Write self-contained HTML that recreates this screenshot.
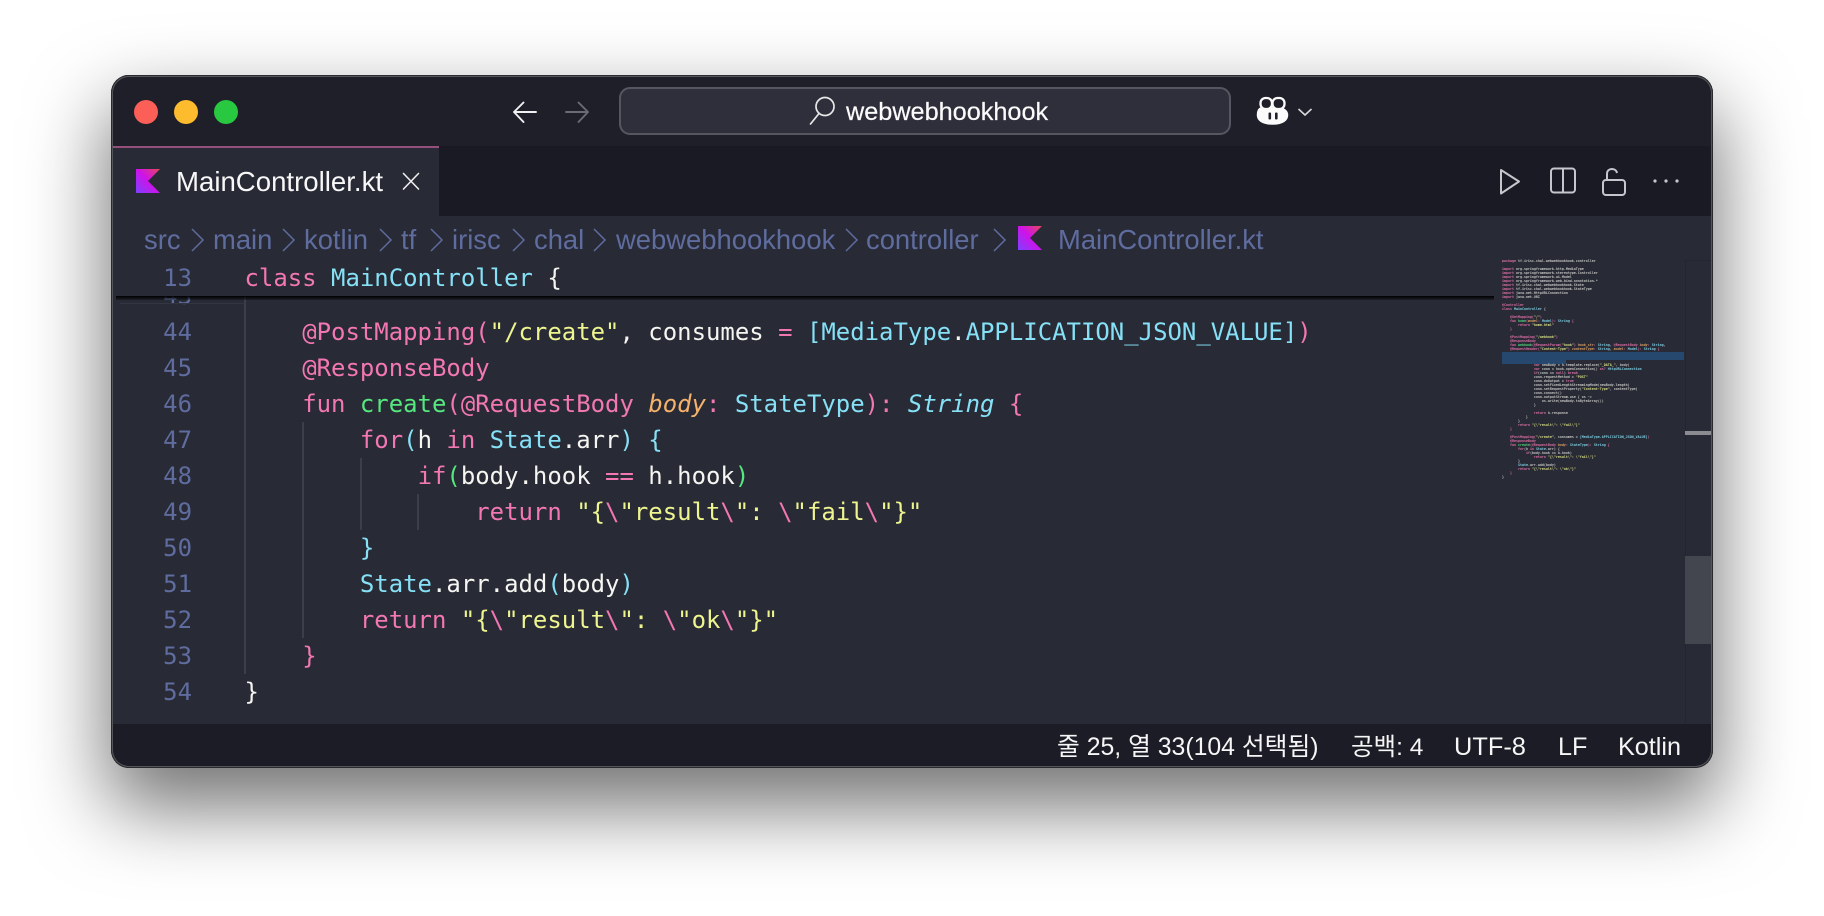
<!DOCTYPE html>
<html><head><meta charset="utf-8"><style>
html,body{margin:0;padding:0;width:1824px;height:916px;background:#fff;overflow:hidden}
.win{position:absolute;left:111px;top:75px;width:1602px;height:693px;border-radius:18px;box-shadow:0 36px 78px 4px rgba(0,0,0,.55)}
.abs{position:absolute}
.s{position:absolute;white-space:pre;font-family:"Liberation Sans","Noto Sans CJK KR",sans-serif;line-height:1}
.bc{font-size:27.4px;color:#5f6c9e;top:226px}
.m{font-family:"DejaVu Sans Mono","Liberation Mono",monospace;font-size:23.96px;line-height:36px;white-space:pre;position:absolute;left:244.5px;color:#f5f6f1}
.n{position:absolute;left:130px;width:62px;text-align:right;font-family:"DejaVu Sans Mono",monospace;font-size:23.96px;line-height:36px;color:#5f6c9e}
.p{color:#f277b2}.c{color:#86e1f6}.g{color:#55e87f}.y{color:#eef58f}.o{color:#f5b26b;font-style:italic}.ci{color:#86e1f6;font-style:italic}
.g1{position:absolute;width:2px;background:#3c3e4c}
.mm{position:absolute;left:1502px;font-family:"DejaVu Sans Mono",monospace;font-size:3.32px;line-height:4px;white-space:pre;color:#d8d9d4;font-weight:bold;filter:blur(.25px);opacity:.88}
</style></head><body>
<div class="win"></div>
<div class="abs" style="left:111px;top:75px;width:1602px;height:693px;border-radius:18px;overflow:hidden;background:#282a36">
 <div class="abs" style="left:0;top:0;width:1602px;height:71px;background:#1e1f29"></div>
 <div class="abs" style="left:0;top:71px;width:1602px;height:70px;background:#191a24"></div>
 <div class="abs" style="left:0;top:71px;width:328px;height:70px;background:#282a36"></div>
 <div class="abs" style="left:0;top:71px;width:328px;height:2px;background:#94507a"></div>
 <div class="abs" style="left:0;top:649px;width:1602px;height:44px;background:#1b1c26"></div>
</div>

<!-- traffic lights -->
<div class="abs" style="left:134px;top:100px;width:24px;height:24px;border-radius:50%;background:#fb5f57"></div>
<div class="abs" style="left:174px;top:100px;width:24px;height:24px;border-radius:50%;background:#fdbc2e"></div>
<div class="abs" style="left:214px;top:100px;width:24px;height:24px;border-radius:50%;background:#28c840"></div>

<!-- nav -->
<svg class="abs" style="left:505px;top:95px" width="95" height="35" fill="none" stroke-linecap="round" stroke-linejoin="round" stroke-width="1.900">
 <path d="M9 17H31M18.500 7.500L9 17L18.500 27" stroke="#f1f1f3"/>
 <path d="M61 17H83M73.500 7.500L83 17L73.500 27" stroke="#6a6b74"/>
</svg>
<div class="abs" style="left:619px;top:87px;width:612px;height:48px;box-sizing:border-box;border:2px solid #55565f;border-radius:11px;background:#2e2f3a"></div>
<svg class="abs" style="left:805px;top:93px" width="36" height="36" fill="none" stroke="#e8e8ea" stroke-width="1.700" stroke-linecap="round">
 <circle cx="20" cy="13.500" r="9"/><path d="M14 20.500L5.500 31"/>
</svg>
<div class="s" style="left:846px;top:100px;font-size:25.25px;color:#fbfbfb;-webkit-text-stroke:.2px #fbfbfb">webwebhookhook</div>

<!-- copilot -->
<svg class="abs" style="left:1254px;top:94px" width="62" height="34">
 <path d="M3.500 21C3.500 17 5 14.500 7 14L26 14C30 14.500 33.500 17 33.500 21C33.500 26 29 30 18.500 30C8 30 3.500 26 3.500 21Z" fill="#fbfbfb" stroke="#fbfbfb" stroke-width="1.500"/>
 <rect x="6.500" y="4" width="11.500" height="11" rx="5" fill="#1e1f29" stroke="#fbfbfb" stroke-width="2.300"/>
 <rect x="18.500" y="4" width="12" height="11" rx="5" fill="#1e1f29" stroke="#fbfbfb" stroke-width="2.300"/>
 <rect x="14.500" y="18.500" width="2.600" height="7" rx="1" fill="#1e1f29"/><rect x="21" y="18.500" width="2.600" height="7" rx="1" fill="#1e1f29"/>
 <path d="M44.500 15L51 21L57.500 15" fill="none" stroke="#d8d8db" stroke-width="1.600"/>
</svg>

<!-- tab -->
<svg class="abs" style="left:136px;top:169px" width="24" height="24"><defs><linearGradient id="k" x1="24" y1="0" x2="0" y2="24" gradientUnits="userSpaceOnUse"><stop offset="0" stop-color="#e44857"/><stop offset=".47" stop-color="#d012e8"/><stop offset="1" stop-color="#7f40ff"/></linearGradient></defs><path d="M0 0H24L12 12L24 24H0Z" fill="url(#k)"/></svg>
<div class="s" style="left:176px;top:168px;font-size:27.6px;color:#f8f8f8">MainController.kt</div>
<svg class="abs" style="left:400px;top:170px" width="22" height="22" fill="none" stroke="#eeeeee" stroke-width="1.600" stroke-linecap="round"><path d="M3.500 3.500L18.500 19M18.500 3.500L3.500 19"/></svg>

<!-- actions -->
<svg class="abs" style="left:1495px;top:163px" width="195" height="37" fill="none" stroke="#c6c7cd" stroke-width="2" stroke-linejoin="round">
 <path d="M6 7V30.500L24 18.500Z"/>
 <rect x="56" y="5.500" width="24" height="24" rx="3"/><path d="M68 5.500V29.500"/>
 <rect x="108" y="17" width="22" height="15" rx="3"/><path d="M112 17V11C112 7.500 114.500 6 117 6C119.500 6 121.500 7.500 122 10"/>
 <circle cx="160" cy="18" r="1.600" fill="#c6c7cd" stroke="none"/><circle cx="171" cy="18" r="1.600" fill="#c6c7cd" stroke="none"/><circle cx="182" cy="18" r="1.600" fill="#c6c7cd" stroke="none"/>
</svg>

<!-- breadcrumbs -->
<div class="s bc" style="left:144px">src</div>
<div class="s bc" style="left:213px">main</div>
<div class="s bc" style="left:304px">kotlin</div>
<div class="s bc" style="left:401px">tf</div>
<div class="s bc" style="left:452px">irisc</div>
<div class="s bc" style="left:534px">chal</div>
<div class="s bc" style="left:616px">webwebhookhook</div>
<div class="s bc" style="left:866px">controller</div>
<div class="s bc" style="left:1058px">MainController.kt</div>
<svg class="abs" style="left:0;top:226px" width="1010" height="26" fill="none" stroke="#5f6c9e" stroke-width="1.500"><path d="M192 3L203 14L192 25M283 3L294 14L283 25M380 3L391 14L380 25M431 3L442 14L431 25M513 3L524 14L513 25M594 3L605 14L594 25M846 3L857 14L846 25M994 3L1005 14L994 25"/></svg>
<svg class="abs" style="left:1018px;top:226px" width="24" height="24"><defs><linearGradient id="k2" x1="24" y1="0" x2="0" y2="24" gradientUnits="userSpaceOnUse"><stop offset="0" stop-color="#e44857"/><stop offset=".47" stop-color="#d012e8"/><stop offset="1" stop-color="#7f40ff"/></linearGradient></defs><path d="M0 0H24L12 12L24 24H0Z" fill="url(#k2)"/></svg>

<!-- guides -->
<div class="g1" style="left:244px;top:296px;height:378px"></div>
<div class="g1" style="left:302px;top:422px;height:216px"></div>
<div class="g1" style="left:360px;top:458px;height:72px"></div>
<div class="g1" style="left:417px;top:494px;height:36px"></div>

<!-- code -->
<div class="n" style="top:278px">43</div>
<div class="n" style="top:314px">44</div><div class="n" style="top:350px">45</div><div class="n" style="top:386px">46</div><div class="n" style="top:422px">47</div><div class="n" style="top:458px">48</div><div class="n" style="top:494px">49</div><div class="n" style="top:530px">50</div><div class="n" style="top:566px">51</div><div class="n" style="top:602px">52</div><div class="n" style="top:638px">53</div><div class="n" style="top:674px">54</div>

<div class="m" style="top:314px">    <span class="p">@PostMapping(</span><span class="y">"/create"</span>, consumes <span class="p">=</span> <span class="c">[MediaType</span>.<span class="c">APPLICATION_JSON_VALUE]</span><span class="p">)</span></div>
<div class="m" style="top:350px">    <span class="p">@ResponseBody</span></div>
<div class="m" style="top:386px">    <span class="p">fun</span> <span class="g">create</span><span class="p">(@RequestBody</span> <span class="o">body</span><span class="p">:</span> <span class="c">StateType</span><span class="p">):</span> <span class="ci">String</span> <span class="p">{</span></div>
<div class="m" style="top:422px">        <span class="p">for</span><span class="c">(</span>h <span class="p">in</span> <span class="c">State</span>.arr<span class="c">) {</span></div>
<div class="m" style="top:458px">            <span class="p">if</span><span class="g">(</span>body.hook <span class="p">==</span> h.hook<span class="g">)</span></div>
<div class="m" style="top:494px">                <span class="p">return</span> <span class="y">"{</span><span class="p">\</span><span class="y">"result</span><span class="p">\</span><span class="y">": </span><span class="p">\</span><span class="y">"fail</span><span class="p">\</span><span class="y">"}"</span></div>
<div class="m" style="top:530px">        <span class="c">}</span></div>
<div class="m" style="top:566px">        <span class="c">State</span>.arr.add<span class="c">(</span>body<span class="c">)</span></div>
<div class="m" style="top:602px">        <span class="p">return</span> <span class="y">"{</span><span class="p">\</span><span class="y">"result</span><span class="p">\</span><span class="y">": </span><span class="p">\</span><span class="y">"ok</span><span class="p">\</span><span class="y">"}"</span></div>
<div class="m" style="top:638px">    <span class="p">}</span></div>
<div class="m" style="top:674px">}</div>

<!-- sticky -->
<div class="abs" style="left:113px;top:256px;width:1380px;height:40px;background:#282a36"></div>
<div class="abs" style="left:116px;top:296px;width:1378px;height:4px;background:linear-gradient(#000,rgba(0,0,0,.25))"></div>
<div class="abs" style="left:120px;top:303px;width:125px;height:1px;background:#333543"></div>
<div class="n" style="top:260px">13</div>
<div class="m" style="top:260px"><span class="p">class</span> <span class="c">MainController</span> {</div>

<!-- minimap -->
<div class="abs" style="left:1494px;top:256px;width:191px;height:467px;background:#282a36"></div>
<div class="abs" style="left:1502px;top:352px;width:182px;height:8px;background:#26486e"></div>
<div class="abs" style="left:1502px;top:360px;width:64px;height:4px;background:#26486e"></div>
<div class="mm" style="top:259px"><span class="p">package</span> tf.irisc.chal.webwebhookhook.controller

<span class="p">import</span> org.springframework.http.MediaType
<span class="p">import</span> org.springframework.stereotype.Controller
<span class="p">import</span> org.springframework.ui.Model
<span class="p">import</span> org.springframework.web.bind.annotation.*
<span class="p">import</span> tf.irisc.chal.webwebhookhook.State
<span class="p">import</span> tf.irisc.chal.webwebhookhook.StateType
<span class="p">import</span> java.net.HttpURLConnection
<span class="p">import</span> java.net.URI

<span class="p">@Controller</span>
<span class="p">class</span> <span class="c">MainController</span> {

    <span class="p">@GetMapping(</span><span class="y">"/"</span><span class="p">)</span>
    <span class="p">fun</span> <span class="g">home</span><span class="p">(</span><span class="o">model</span><span class="p">:</span> <span class="c">Model</span><span class="p">):</span> <span class="c">String</span> <span class="p">{</span>
        <span class="p">return</span> <span class="y">"home.html"</span>
    <span class="p">}</span>

    <span class="p">@PostMapping(</span><span class="y">"/webhook"</span><span class="p">)</span>
    <span class="p">@ResponseBody</span>
    <span class="p">fun</span> <span class="g">webhook</span><span class="p">(@RequestParam(</span><span class="y">"hook"</span><span class="p">)</span> <span class="o">hook_str</span><span class="p">:</span> <span class="c">String</span>, <span class="p">@RequestBody</span> <span class="o">body</span><span class="p">:</span> <span class="c">String</span>,
    <span class="p">@RequestHeader(</span><span class="y">"Content-Type"</span><span class="p">)</span> <span class="o">contentType</span><span class="p">:</span> <span class="c">String</span>, <span class="o">model</span><span class="p">:</span> <span class="c">Model</span><span class="p">):</span> <span class="c">String</span> <span class="p">{</span>



                <span class="p">var</span> newBody = h.template.replace(<span class="y">"_DATA_"</span>, body)
                <span class="p">var</span> conn = hook.openConnection() <span class="p">as?</span> <span class="c">HttpURLConnection</span>
                <span class="p">if</span>(conn == <span class="p">null</span>) <span class="p">break</span>
                conn.requestMethod = <span class="y">"POST"</span>
                conn.doOutput = <span class="p">true</span>
                conn.setFixedLengthStreamingMode(newBody.length)
                conn.setRequestProperty(<span class="y">"Content-Type"</span>, contentType)
                conn.connect()
                conn.outputStream.use { os -&gt;
                    os.write(newBody.toByteArray())
                }

                <span class="p">return</span> h.response
            }
        }
        <span class="p">return</span> <span class="y">"{\"result\": \"fail\"}"</span>
    <span class="p">}</span>

    <span class="p">@PostMapping(</span><span class="y">"/create"</span>, consumes = <span class="c">[MediaType.APPLICATION_JSON_VALUE]</span><span class="p">)</span>
    <span class="p">@ResponseBody</span>
    <span class="p">fun</span> <span class="g">create</span><span class="p">(@RequestBody</span> <span class="o">body</span><span class="p">:</span> <span class="c">StateType</span><span class="p">):</span> <span class="c">String</span> <span class="p">{</span>
        <span class="p">for</span>(h <span class="p">in</span> <span class="c">State</span>.arr) {
            <span class="p">if</span>(body.hook == h.hook)
                <span class="p">return</span> <span class="y">"{\"result\": \"fail\"}"</span>
        }
        <span class="c">State</span>.arr.add(body)
        <span class="p">return</span> <span class="y">"{\"result\": \"ok\"}"</span>
    <span class="p">}</span>
}</div>

<!-- scrollbar -->
<div class="abs" style="left:1685px;top:260px;width:1px;height:463px;background:#23252f"></div>
<div class="abs" style="left:1685px;top:260px;width:27px;height:1px;background:#23252f"></div>
<div class="abs" style="left:1685px;top:431px;width:27px;height:4px;background:#8b8c91"></div>
<div class="abs" style="left:1685px;top:556px;width:27px;height:88px;background:#44464f"></div>

<!-- status -->
<div class="s" style="left:1057px;top:736px;font-size:24.8px;color:#f6f6f6">줄 25, 열 33(104 선택됨)</div>
<div class="s" style="left:1351px;top:736px;font-size:24.5px;color:#f6f6f6">공백: 4</div>
<div class="s" style="left:1454px;top:735px;font-size:25.4px;color:#f6f6f6">UTF-8</div>
<div class="s" style="left:1558px;top:735px;font-size:25.2px;color:#f6f6f6">LF</div>
<div class="s" style="left:1618px;top:735px;font-size:25.2px;color:#f6f6f6">Kotlin</div>

<!-- edge -->
<div class="abs" style="left:111px;top:75px;width:1602px;height:693px;box-sizing:border-box;border-radius:18px;box-shadow:inset 0 0 0 1px #2a2a2e,inset 0 0 0 2px #55565b;pointer-events:none"></div>
</body></html>
